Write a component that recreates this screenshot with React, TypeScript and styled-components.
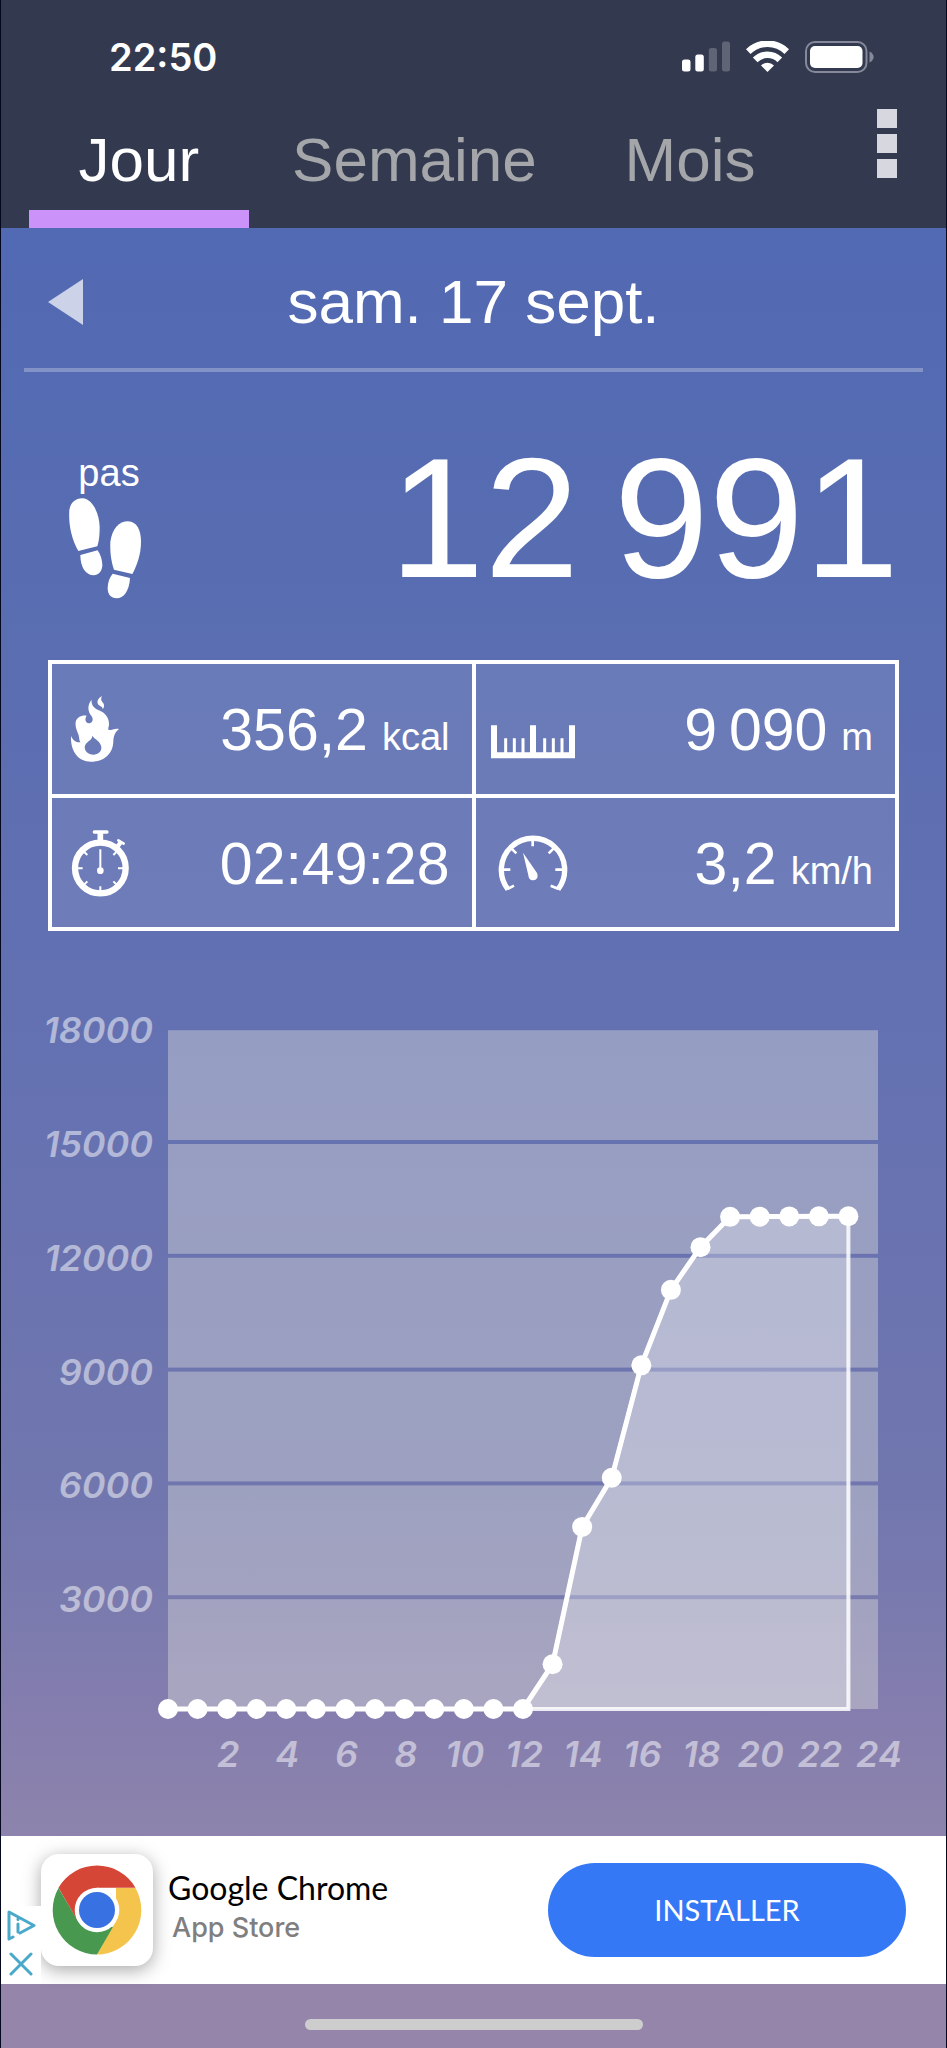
import React from "react";
import styled, { createGlobalStyle } from "styled-components";

const GlobalStyle = createGlobalStyle`
  *, *::before, *::after { box-sizing: border-box; }
  body { margin: 0; background: #000; }
  button { margin: 0; padding: 0; border: 0; background: none; font: inherit; color: inherit; cursor: pointer; }
  svg { display: block; }
`;

const sans = `"Liberation Sans", Arial, sans-serif`;
const ui = `Inter, "Liberation Sans", sans-serif`;

const Page = styled.div`
  display: flex;
  flex-direction: column;
  min-height: 100vh;
  border: solid #04081f;
  border-width: 0 1px;
  color: #fff;
  font-family: ${sans};
  background: linear-gradient(
    #5068b4 0%, #5269b3 12%, #586db1 28%, #5d6eb1 38%, #6371b2 50%,
    #6a73b0 61%, #7177ae 73%, #797aae 78%, #857eae 84%, #8c83ac 89%, #9585ab 97%, #9585ab 100%
  );
`;

const Header = styled.header`
  background: #333a4f;
`;

const StatusBar = styled.div`
  display: flex;
  align-items: center;
  justify-content: space-between;
  height: 109px;
  padding: 4px 72px 0 108px;
  font: 600 38px/48px ${ui};
`;

const StatusIcons = styled.div`
  display: flex;
  align-items: center;
  gap: 16px;
`;

const Tabs = styled.nav`
  display: grid;
  grid-template-columns: 7fr 7fr 7fr 3fr;
  height: 119px;
`;

const Tab = styled.button<{ $active?: boolean }>`
  display: flex;
  flex-direction: column;
  align-items: center;
  justify-content: flex-end;
  font-size: 62px;
  line-height: 72px;
  color: ${(p) => (p.$active ? "#fff" : "#a4a6aa")};

  &::after {
    content: "";
    width: 80%;
    height: 18px;
    margin-top: 14px;
    background: ${(p) => (p.$active ? "#cb92f9" : "transparent")};
  }
`;

const MenuButton = styled.button`
  display: flex;
  flex-direction: column;
  align-items: center;
  gap: 6px;
`;

const MenuDot = styled.span`
  width: 20px;
  height: 19px;
  background: #d6d7df;
`;

const DateBar = styled.div`
  display: grid;
  grid-template-columns: 36px 1fr 36px;
  align-items: center;
  height: 144px;
  margin: 0 23px;
  padding: 8px 24px 0;
  border-bottom: 4px solid rgba(255, 255, 255, 0.27);
`;

const DateTitle = styled.h1`
  margin: 0;
  font-weight: 400;
  font-size: 62px;
  line-height: 72px;
  text-align: center;
`;

const Steps = styled.section`
  display: flex;
  align-items: flex-end;
  justify-content: space-between;
  padding: 60px 47px 0 67px;
`;

const StepsLabel = styled.div`
  display: flex;
  flex-direction: column;
  align-items: center;
  gap: 2px;
  padding-bottom: 5px;
`;

const StepsUnit = styled.span`
  padding-left: 8px;
  font-size: 38px;
  line-height: 44px;
`;

const StepsValue = styled.div`
  font-size: 171px;
  line-height: 172px;
`;

const Stats = styled.dl`
  display: grid;
  grid-template-columns: calc(50% + 2px) 1fr;
  margin: 56px 47px 0;
  border: 4px solid #fff;
  background: rgba(255, 255, 255, 0.09);
`;

const Stat = styled.div<{ $right?: boolean; $bottom?: boolean }>`
  display: flex;
  align-items: center;
  justify-content: space-between;
  height: ${(p) => (p.$bottom ? "134px" : "129px")};
  padding: 0 22px 0 15px;
  border: solid #fff;
  border-width: 0 ${(p) => (p.$right ? "4px" : "0")} ${(p) => (p.$bottom ? "4px" : "0")} 0;
`;

const StatName = styled.dt`
  width: 84px;
`;

const StatValue = styled.dd`
  display: flex;
  align-items: baseline;
  gap: 14px;
  margin: 0;
  padding-top: 2px;
  font-size: 59px;
  line-height: 68px;
`;

const Unit = styled.span`
  font-size: 38px;
  line-height: 40px;
`;

const ChartBox = styled.section`
  padding: 69px 0 36px;

  svg {
    width: 100%;
    height: auto;
  }
`;

const AxisText = styled.text`
  font: italic 600 36px ${ui};
  fill: #fff;
  fill-opacity: 0.5;
`;

const Ad = styled.aside`
  display: flex;
  align-items: center;
  height: 148px;
  padding-right: 40px;
  background: #fff;
  color: #000;
`;

const AdControls = styled.div`
  position: relative;
  z-index: 1;
  display: flex;
  flex-direction: column;
  align-items: center;
  align-self: flex-end;
  gap: 11px;
  width: 40px;
  height: 78px;
  padding-top: 4px;
  background: #fff;
`;

const AppIcon = styled.div`
  display: grid;
  place-items: center;
  width: 112px;
  height: 112px;
  border-radius: 18px;
  background: #fff;
  box-shadow: 0 4px 18px rgba(0, 0, 0, 0.35);
`;

const AdText = styled.div`
  flex: 1;
  padding: 0 0 4px 15px;
`;

const AdTitle = styled.div`
  font: 400 32px/40px Lato, sans-serif;
`;

const AdStore = styled.div`
  padding-left: 4px;
  color: #7f7f7f;
  font: 500 27px/40px ${ui};
`;

const InstallButton = styled.button`
  width: 358px;
  height: 94px;
  border-radius: 47px;
  background: #3478f6;
  color: #fff;
  font: 400 29px/40px Lato, sans-serif;
`;

const HomeBar = styled.footer`
  display: flex;
  justify-content: center;
  padding: 35px 0 18px;
`;

const HomeIndicator = styled.div`
  width: 338px;
  height: 11px;
  border-radius: 6px;
  background: #cdcdcd;
`;

const Signal = () => (
  <svg width="48" height="31" viewBox="0 0 48 31" fill="#fff" aria-hidden="true">
    <rect x="0" y="18.5" width="8.5" height="12" rx="2.5" />
    <rect x="13.3" y="13.5" width="8.5" height="17" rx="2.5" />
    <rect x="26.8" y="7" width="8.2" height="23.5" rx="2.5" fillOpacity="0.22" />
    <rect x="40" y="0.5" width="8" height="30" rx="2.5" fillOpacity="0.22" />
  </svg>
);

const Wifi = () => (
  <svg width="43" height="31" viewBox="0 0 43 31" aria-hidden="true">
    <g fill="none" stroke="#fff" strokeWidth="6.6">
      <path d="M2.2 11.6 A27.5 27.5 0 0 1 40.8 11.6" transform="translate(0 -1)" />
      <path d="M9.2 18.9 A17.4 17.4 0 0 1 33.8 18.9" />
    </g>
    <path d="M21.5 31 L15 24.4 A9.4 9.4 0 0 1 28 24.4 Z" fill="#fff" />
  </svg>
);

const Battery = () => (
  <svg width="69" height="32" viewBox="0 0 69 32" aria-hidden="true">
    <rect x="1" y="1" width="60.5" height="30" rx="9" fill="none" stroke="#858999" strokeWidth="2" />
    <rect x="5" y="5" width="52.5" height="22" rx="5" fill="#fff" />
    <path d="M64.5 10.5 C70 13 70 19 64.5 21.5 Z" fill="#858999" />
  </svg>
);

const Footprints = () => (
  <svg width="74" height="102" viewBox="204 800 222 306" fill="#fff" aria-hidden="true">
    <path d="M235 962 C214 925 205 880 208 840 C211 815 229 803 248 804 C278 806 298 850 299 890 C299 915 297 932 292 948 Z" />
    <path d="M241 974 L293 960 C302 973 307 990 307 1005 C306 1024 295 1035 281 1035 C257 1035 241 1010 241 974 Z" />
    <path d="M342 1018 C332 990 330 960 331 935 C336 895 358 873 384 873 C411 874 423 900 423 935 C423 972 411 1005 397 1031 Z" />
    <path d="M338 1030 L390 1043 C388 1083 370 1104 350 1104 C332 1104 323 1091 323 1074 C323 1055 329 1041 338 1030 Z" />
  </svg>
);

const Flame = () => (
  <svg width="84" height="74" viewBox="84 126 252 222" fill="#fff" role="img" aria-label="Calories">
    <path
      fillRule="evenodd"
      d="M96 258 C102 272 112 278 124 277 C120 270 121 263 119 256 C115 244 108 232 110 216 C113 203 126 195 143 197 C137 205 138 217 149 220 C161 221 164 208 158 199 C144 182 146 162 158 149 C156 164 164 173 178 180 C200 188 212 206 210 226 C208 233 207 238 209 240 C217 242 226 234 240 237 C228 246 224 258 223 272 C223 310 196 335 156 335 C116 335 94 302 96 258 Z
      M160 257 C160 273 138 274 137 292 C138 307 150 314 163 314 C177 314 188 305 187 291 C185 274 168 269 160 257 Z"
    />
    <path d="M189 138 C176 145 171 158 180 166 C187 170 192 173 191 178 C197 170 197 163 190 156 C185 150 186 144 189 138 Z" />
  </svg>
);

const Stopwatch = () => (
  <svg width="84" height="74" viewBox="84 527 252 222" fill="none" stroke="#fff" role="img" aria-label="Durée">
    <circle cx="184" cy="653" r="76" strokeWidth="19" />
    <path d="M166 545 H204" strokeWidth="10" strokeLinecap="round" />
    <path d="M184 545 V574" strokeWidth="17" />
    <path d="M233 592 L246 575" strokeWidth="13" />
    <path d="M238 570 L254 580" strokeWidth="8" strokeLinecap="round" />
    <path d="M184 597 V655" strokeWidth="6" />
    <circle cx="184" cy="661" r="10" fill="#fff" stroke="none" />
    <path d="M116 654 H131 M237 654 H252 M184 708 V722 M136 702 L145 693 M232 702 L223 693 M136 605 L145 614 M232 605 L223 614" strokeWidth="6" />
  </svg>
);

const Ruler = () => (
  <svg width="84" height="74" viewBox="63 126 252 222" fill="none" stroke="#fff" role="img" aria-label="Distance">
    <path d="M72 226 V316 H306 V226 M189 226 V316" strokeWidth="18" />
    <path d="M107 265 V310 M133 265 V310 M159 265 V310 M224 265 V310 M250 265 V310 M276 265 V310" strokeWidth="9" />
  </svg>
);

const Gauge = () => (
  <svg width="84" height="74" viewBox="63 527 252 222" fill="none" stroke="#fff" role="img" aria-label="Vitesse">
    <path d="M114 717 A95 95 0 1 1 264 717" strokeWidth="16" />
    <path d="M98 658 H121 M279 658 H256 M188 568 V588 M124 594 L139 609 M251 594 L236 609 M112 716 L132 706 M266 716 L242 706" strokeWidth="8" />
    <path d="M159 607 L201 668 C206 681 200 689 190 690 C180 690 176 684 175 675 Z" fill="#fff" stroke="none" />
  </svg>
);

const AdChoices = () => (
  <svg width="29" height="31" viewBox="0 0 29 31" fill="none" stroke="#4aa9c9" strokeWidth="3" strokeLinejoin="round" strokeLinecap="round" aria-hidden="true">
    <path d="M6 27 L2 29 V2 L27 15.5 L13 23" />
    <path d="M11 14 V22" />
    <path d="M11 9 V9.5" />
  </svg>
);

const Cross = () => (
  <svg width="24" height="24" viewBox="0 0 24 24" stroke="#4aa9c9" strokeWidth="3" strokeLinecap="round" aria-hidden="true">
    <path d="M2 2 L22 22 M22 2 L2 22" />
  </svg>
);

const Chrome = () => (
  <svg width="90" height="90" viewBox="-45 -45 90 90" aria-hidden="true">
    <path d="M19 -22 H38.5 A44.5 44.5 0 0 1 0 44.5 L19 11 Z" fill="#f4c44c" />
    <path d="M-38.5 -22 A44.5 44.5 0 0 0 0 44.5 L16 17 L-19 11 Z" fill="#48994f" />
    <path d="M-38.5 -22.3 A44.5 44.5 0 0 1 38.5 -22.3 H0 L-19.2 11 Z" fill="#d54637" />
    <circle r="22.3" fill="#fff" />
    <circle r="18" fill="#3871e2" />
  </svg>
);

const hourlySteps = [
  0, 0, 0, 0, 0, 0, 0, 0, 0, 0, 0, 0, 0, 1180, 4800, 6095, 9060, 11050, 12175, 12975, 12980, 12985, 12988, 12991,
];

const plot = { left: 167, right: 877, bottom: 709, step: 113.8, line: 4 };
const xAt = (hour: number) => plot.left + (hour * (plot.right - plot.left)) / 24;
const yAt = (steps: number) => plot.bottom - (steps / 3000) * plot.step;

const Chart = () => {
  const points = hourlySteps.map((s, h) => `${xAt(h)},${yAt(s)}`);
  const levels = [3000, 6000, 9000, 12000, 15000, 18000];
  const hours = [2, 4, 6, 8, 10, 12, 14, 16, 18, 20, 22, 24];
  return (
    <svg viewBox="0 0 945 800" role="img" aria-label="Pas cumulés par heure">
      {levels.map((level) => (
        <React.Fragment key={level}>
          <rect
            x={plot.left}
            y={yAt(level) + plot.line}
            width={plot.right - plot.left}
            height={plot.step - plot.line}
            fill="#e2e0dc"
            fillOpacity="0.4"
          />
          <AxisText x={152} y={yAt(level) + 17} textAnchor="end">
            {level}
          </AxisText>
        </React.Fragment>
      ))}
      <polygon
        points={[...points, `${xAt(23)},${plot.bottom}`].join(" ")}
        fill="#fff"
        fillOpacity="0.28"
        stroke="#fff"
        strokeOpacity="0.85"
        strokeWidth="4"
      />
      <polyline points={points.join(" ")} fill="none" stroke="#fff" strokeWidth="5" />
      {hourlySteps.map((s, h) => (
        <circle key={h} cx={xAt(h)} cy={yAt(s)} r="10" fill="#fff" />
      ))}
      {hours.map((h) => (
        <AxisText key={h} x={xAt(h) + 1} y={767} textAnchor="middle">
          {h}
        </AxisText>
      ))}
    </svg>
  );
};

export default function App() {
  return (
    <Page>
      <GlobalStyle />
      <Header>
        <StatusBar>
          <span>22:50</span>
          <StatusIcons>
            <Signal />
            <Wifi />
            <Battery />
          </StatusIcons>
        </StatusBar>
        <Tabs>
          <Tab $active>Jour</Tab>
          <Tab>Semaine</Tab>
          <Tab>Mois</Tab>
          <MenuButton aria-label="Menu">
            <MenuDot />
            <MenuDot />
            <MenuDot />
          </MenuButton>
        </Tabs>
      </Header>

      <DateBar>
        <button aria-label="Jour précédent">
          <svg width="36" height="46" viewBox="0 0 36 46" aria-hidden="true">
            <path d="M0 23 L35 0 V46 Z" fill="#ccd2e7" />
          </svg>
        </button>
        <DateTitle>sam. 17 sept.</DateTitle>
      </DateBar>

      <Steps>
        <StepsLabel>
          <StepsUnit>pas</StepsUnit>
          <Footprints />
        </StepsLabel>
        <StepsValue>12{"\u2009"}991</StepsValue>
      </Steps>

      <Stats>
        <Stat $right $bottom>
          <StatName><Flame /></StatName>
          <StatValue>356,2 <Unit>kcal</Unit></StatValue>
        </Stat>
        <Stat $bottom>
          <StatName><Ruler /></StatName>
          <StatValue>9{"\u2009"}090 <Unit>m</Unit></StatValue>
        </Stat>
        <Stat $right>
          <StatName><Stopwatch /></StatName>
          <StatValue>02:49:28</StatValue>
        </Stat>
        <Stat>
          <StatName><Gauge /></StatName>
          <StatValue>3,2 <Unit>km/h</Unit></StatValue>
        </Stat>
      </Stats>

      <ChartBox>
        <Chart />
      </ChartBox>

      <Ad>
        <AdControls>
          <button aria-label="Choix publicitaires"><AdChoices /></button>
          <button aria-label="Fermer"><Cross /></button>
        </AdControls>
        <AppIcon><Chrome /></AppIcon>
        <AdText>
          <AdTitle>Google Chrome</AdTitle>
          <AdStore>App Store</AdStore>
        </AdText>
        <InstallButton>INSTALLER</InstallButton>
      </Ad>

      <HomeBar>
        <HomeIndicator />
      </HomeBar>
    </Page>
  );
}
